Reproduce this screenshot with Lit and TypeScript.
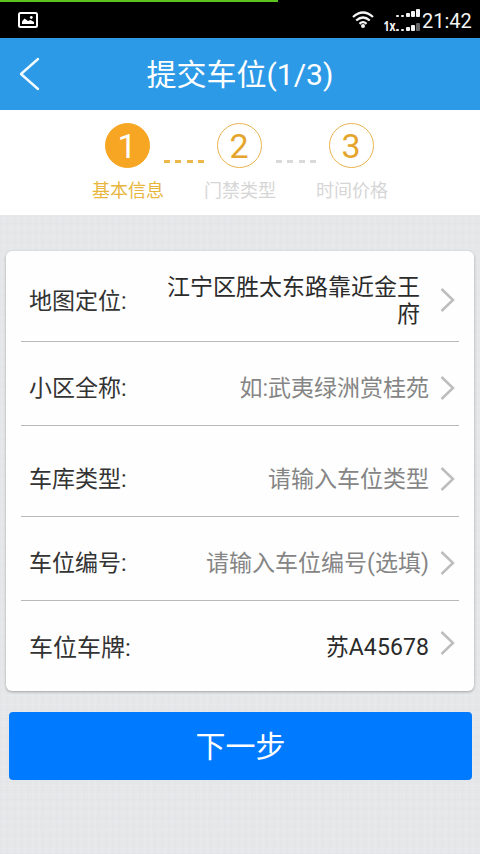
import { LitElement, html, css, svg } from "lit";
import { customElement } from "lit/decorators.js";
import { classMap } from "lit/directives/class-map.js";

const steps = [
  { num: "1", label: "基本信息", active: true },
  { num: "2", label: "门禁类型", active: false },
  { num: "3", label: "时间价格", active: false },
];

const rows = [
  { id: "map", label: "地图定位:", value: "江宁区胜太东路靠近金王府", hint: false },
  { id: "name", label: "小区全称:", value: "如:武夷绿洲赏桂苑", hint: true },
  { id: "type", label: "车库类型:", value: "请输入车位类型", hint: true },
  { id: "code", label: "车位编号:", value: "请输入车位编号(选填)", hint: true },
  { id: "plate", label: "车位车牌:", value: "苏A45678", hint: false },
];

const bars = [2, 2, 4, 6, 8];

@customElement("app-root")
export class AppRoot extends LitElement {
  static styles = css`
    :host {
      display: flex;
      flex-direction: column;
      width: 480px;
      height: 854px;
      overflow: hidden;
      box-sizing: border-box;
      font-family: Roboto, "Noto Sans CJK SC", sans-serif;
      color: #333;
      background-color: #e5e7e9;
      background-image:
        repeating-linear-gradient(90deg, rgba(120, 130, 140, 0.015) 0 1px, transparent 1px 4px, rgba(255, 255, 255, 0.08) 4px 5px, transparent 5px 7px),
        repeating-linear-gradient(0deg, rgba(120, 130, 140, 0.015) 0 1px, transparent 1px 5px, rgba(255, 255, 255, 0.08) 5px 6px, transparent 6px 9px);
    }
    svg { display: block; flex: none; }
    .status {
      height: 38px;
      flex: none;
      box-sizing: border-box;
      background: linear-gradient(90deg, #5cc21c 278px, #000 278px) top / 100% 2px no-repeat #000;
      color: #f4f4f4;
      display: flex;
      align-items: center;
      padding: 2px 9px 0 18px;
    }
    .gap { flex: 1; }
    .wifi { margin: 0 9px 2px 0; }
    .signal { margin-right: 2px; }
    .clock { font-size: 20px; line-height: 24px; width: 49px; white-space: nowrap; padding-top: 1px; }
    .net { font: 700 14px "Open Sans", sans-serif; fill: #f4f4f4; }
    .bar {
      height: 72px;
      flex: none;
      background: #2d9ae7;
      color: #fff;
      display: grid;
      grid-template-columns: 60px 1fr 60px;
      align-items: center;
    }
    .back { margin-left: 18px; }
    .title { font-size: 30px; line-height: 36px; text-align: center; white-space: nowrap; padding-top: 2px; }
    .steps {
      height: 105px;
      flex: none;
      background: #fff;
      display: flex;
      justify-content: center;
      box-sizing: border-box;
      padding-top: 13px;
    }
    .step { width: 72px; display: flex; flex-direction: column; align-items: center; }
    .circle {
      width: 45px;
      height: 45px;
      box-sizing: border-box;
      border: 1px solid #e9b450;
      border-radius: 50%;
      color: #e5a52c;
      font: 34px/45px Roboto, sans-serif;
      text-align: center;
      margin-right: 2px;
    }
    .circle.on { background: #f6a623; border-color: #f6a623; color: #fff; }
    .caption { font-size: 18px; line-height: 22px; margin-top: 12px; color: #d6d6d6; white-space: nowrap; }
    .caption.on { color: #e8b63f; }
    .dots { width: 40px; display: flex; justify-content: space-between; padding-top: 37px; }
    .dash { width: 6px; height: 3px; background: #d9d9d9; }
    .dash.on { background: #edb84a; }
    .card {
      margin: 36px 6px 0;
      height: 440px;
      flex: none;
      box-sizing: border-box;
      padding: 0 15px;
      background: #fefefe;
      border-radius: 6px;
      box-shadow: 0 1px 3px rgba(0, 0, 0, 0.3);
    }
    .row {
      display: flex;
      align-items: center;
      box-sizing: border-box;
      border-bottom: 1px solid #b9b9b9;
      padding: 0 4px 0 8px;
      font-size: 23px;
      line-height: 27px;
    }
    .map { height: 91px; padding-top: 8px; }
    .name { height: 84px; padding-top: 8px; }
    .type { height: 91px; padding-top: 15px; }
    .code { height: 84px; padding-top: 8px; }
    .plate { height: 90px; border-bottom: 0; padding-top: 2px; }
    .label { flex: none; white-space: nowrap; padding-top: 2px; }
    .plate .label { font-size: 24px; }
    .value { flex: 1; text-align: right; margin-right: 11px; color: #2b2b2b; padding-top: 2px; }
    .value.hint { color: #858585; }
    .map .value { padding-left: 36px; margin-right: 20px; }
    .plate .value { padding-top: 0; letter-spacing: 0.1px; }
    .plate .chev { margin-bottom: 8px; }
    .next {
      margin: 21px 8px 0 9px;
      height: 68px;
      flex: none;
      border: 0;
      padding: 2px 0 0;
      border-radius: 4px;
      background: #007aff;
      color: #fff;
      font: 30px/66px Roboto, "Noto Sans CJK SC", sans-serif;
      text-align: center;
    }
  `;

  private signal(y: number, dimLast: boolean) {
    return bars.map(
      (h, i) => svg`<rect x=${13 + i * 5} y=${y - h} width=${i < 2 ? 3 : 4} height=${h} rx="1" fill=${dimLast && i === 4 ? "#666" : "#f4f4f4"} />`
    );
  }

  render() {
    return html`
      <div class="status">
        <svg width="20" height="16" viewBox="0 0 20 16">
          <rect x="1" y="1" width="18" height="14" rx="1.5" fill="none" stroke="#fff" stroke-width="2" />
          <path d="M4 12V9.5L6.5 6.5L10 9L12.500 8L16 10V12Z" fill="#fff" />
          <circle cx="13.300" cy="5.500" r="1.400" fill="#fff" />
        </svg>
        <div class="gap"></div>
        <svg class="wifi" width="22" height="17" viewBox="0 0 22 17" fill="none" stroke="#f4f4f4" stroke-width="2.300">
          <path d="M1 6Q11 -3 21 6M4.200 9.500Q11 3.500 17.800 9.500M7.500 12.800Q11 9.500 14.500 12.800" />
          <circle cx="11" cy="15" r="2" fill="#f4f4f4" stroke="none" />
        </svg>
        <svg class="signal" width="37" height="30" viewBox="0 -2 37 30">
          <text class="net" x="0.500" y="23.500" textLength="12" lengthAdjust="spacingAndGlyphs">1x</text>
          ${this.signal(10, false)} ${this.signal(24, true)}
        </svg>
        <div class="clock">21:42</div>
      </div>
      <div class="bar">
        <svg class="back" width="22" height="36" viewBox="0 0 22 36">
          <path d="M20 3L3 18L20 33" fill="none" stroke="#f2fbff" stroke-width="2.400" stroke-linecap="round" stroke-linejoin="round" />
        </svg>
        <div class="title">提交车位(1/3)</div>
      </div>
      <div class="steps">
        ${steps.map(
          (s, i) => html`
            ${i
              ? html`<div class="dots">
                  ${[0, 1, 2, 3].map(() => html`<span class=${classMap({ dash: true, on: i === 1 })}></span>`)}
                </div>`
              : ""}
            <div class="step">
              <div class=${classMap({ circle: true, on: s.active })}>${s.num}</div>
              <div class=${classMap({ caption: true, on: s.active })}>${s.label}</div>
            </div>
          `
        )}
      </div>
      <div class="card">
        ${rows.map(
          (r) => html`
            <div class="row ${r.id}">
              <div class="label">${r.label}</div>
              <div class=${classMap({ value: true, hint: r.hint })}>${r.value}</div>
              <svg class="chev" width="15" height="26" viewBox="0 0 15 26">
                <path d="M1.500 2L13 13L1.500 24" fill="none" stroke="#bdbdbd" stroke-width="2.500" />
              </svg>
            </div>
          `
        )}
      </div>
      <button class="next">下一步</button>
    `;
  }
}
